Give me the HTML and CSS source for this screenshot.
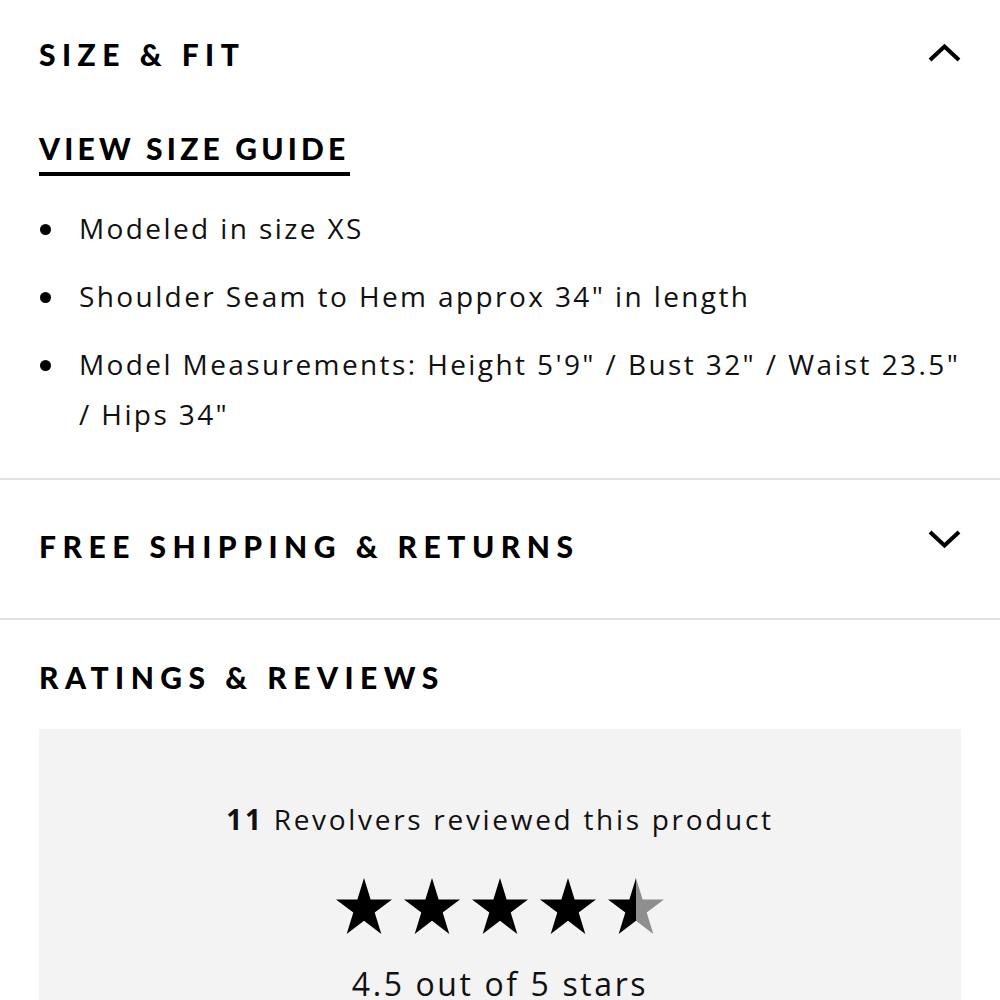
FILE: index.html
```html
<!DOCTYPE html>
<html lang="en">
<head>
<meta charset="utf-8">
<title>Size &amp; Fit</title>
<link rel="stylesheet" href="styles.css">
</head>
<body>
<div class="page">
  <section class="acc acc-open">
    <div class="acc-header first">
      <h2 class="acc-title">SIZE &amp; FIT</h2>
      <svg class="chev" width="33" height="18" viewBox="0 0 33 18" aria-hidden="true"><polyline points="2,16 16.5,2.5 31,16" fill="none" stroke="#000" stroke-width="4"/></svg>
    </div>
    <div class="acc-body">
      <a class="size-guide" href="#">VIEW SIZE GUIDE</a>
      <ul class="fit-list">
        <li>Modeled in size XS</li>
        <li>Shoulder Seam to Hem approx 34" in length</li>
        <li>Model Measurements: Height 5'9" / Bust 32" / Waist 23.5" / Hips 34"</li>
      </ul>
    </div>
  </section>
  <section class="acc">
    <div class="acc-header">
      <h2 class="acc-title">FREE SHIPPING &amp; RETURNS</h2>
      <svg class="chev chev-down" width="33" height="18" viewBox="0 0 33 18" aria-hidden="true"><polyline points="2,2 16.5,15.5 31,2" fill="none" stroke="#000" stroke-width="4"/></svg>
    </div>
  </section>
  <section class="reviews">
    <h2 class="acc-title">RATINGS &amp; REVIEWS</h2>
    <div class="review-box">
      <p class="review-count"><b>11</b> Revolvers reviewed this product</p>
      <div class="stars">
        <svg class="star" viewBox="2.45 0 95.1 90.45" preserveAspectRatio="none"><path d="M50 0L61.23 34.55L97.55 34.55L68.17 55.9L79.39 90.45L50 69.1L20.61 90.45L31.83 55.9L2.45 34.55L38.77 34.55Z" fill="#000"/></svg>
        <svg class="star" viewBox="2.45 0 95.1 90.45" preserveAspectRatio="none"><path d="M50 0L61.23 34.55L97.55 34.55L68.17 55.9L79.39 90.45L50 69.1L20.61 90.45L31.83 55.9L2.45 34.55L38.77 34.55Z" fill="#000"/></svg>
        <svg class="star" viewBox="2.45 0 95.1 90.45" preserveAspectRatio="none"><path d="M50 0L61.23 34.55L97.55 34.55L68.17 55.9L79.39 90.45L50 69.1L20.61 90.45L31.83 55.9L2.45 34.55L38.77 34.55Z" fill="#000"/></svg>
        <svg class="star" viewBox="2.45 0 95.1 90.45" preserveAspectRatio="none"><path d="M50 0L61.23 34.55L97.55 34.55L68.17 55.9L79.39 90.45L50 69.1L20.61 90.45L31.83 55.9L2.45 34.55L38.77 34.55Z" fill="#000"/></svg>
        <svg class="star" viewBox="2.45 0 95.1 90.45" preserveAspectRatio="none"><defs><linearGradient id="half" x1="0" x2="1" y1="0" y2="0"><stop offset="0.5" stop-color="#000"/><stop offset="0.5" stop-color="#8e8e8e"/></linearGradient></defs><path d="M50 0L61.23 34.55L97.55 34.55L68.17 55.9L79.39 90.45L50 69.1L20.61 90.45L31.83 55.9L2.45 34.55L38.77 34.55Z" fill="url(#half)"/></svg>
      </div>
      <p class="rating-text">4.5 out of 5 stars</p>
    </div>
  </section>
</div>
</body>
</html>
```

FILE: styles.css
```css
* { box-sizing: border-box; }
html, body { margin: 0; padding: 0; background: #fff; }
body {
  font-family: "Open Sans", "Noto Sans", sans-serif;
  color: #111;
}
.page {
  width: 1000px;
  height: 1000px;
  overflow: hidden;
}
.acc {
  border-bottom: 2px solid #e0e0e0;
}
.acc-header {
  display: flex;
  align-items: center;
  justify-content: space-between;
  height: 138px;
  padding: 0 39px 6px;
}
.acc-header.first {
  height: auto;
  padding: 39px 39px 0;
}
.acc-title {
  margin: 0;
  font-family: "Lato", "Liberation Sans", sans-serif;
  font-weight: 900;
  font-size: 30px;
  line-height: 30px;
  letter-spacing: 6.5px;
  color: #000;
}
.chev { display: block; margin-top: -2px; }
.chev-down { margin-top: -14px; }
.acc-body {
  padding: 64px 39px 39px;
}
.size-guide {
  display: inline-block;
  font-family: "Lato", "Liberation Sans", sans-serif;
  font-weight: 900;
  font-size: 30px;
  line-height: 30px;
  letter-spacing: 4.2px;
  color: #000;
  text-decoration: none;
  padding-bottom: 9px;
  border-bottom: 4px solid #000;
}
.fit-list {
  list-style: none;
  margin: 27px 0 0;
  padding: 0;
  font-size: 28px;
  line-height: 50px;
  letter-spacing: 2.4px;
}
.fit-list li {
  display: flex;
  margin-top: 18px;
}
.fit-list li:first-child { margin-top: 0; }
.fit-list li::before {
  content: "";
  flex: none;
  width: 11px;
  height: 11px;
  border-radius: 50%;
  background: #000;
  margin: 21px 28px 0 1px;
}
.reviews {
  padding: 42px 39px 0;
}
.review-box {
  margin-top: 37px;
  background: #f3f3f3;
  padding: 70px 20px 40px;
  text-align: center;
}
.review-count {
  margin: 0;
  font-size: 28px;
  line-height: 40px;
  letter-spacing: 2.7px;
}
.review-count b { font-weight: 700; }
.stars {
  display: flex;
  justify-content: center;
  gap: 12px;
  margin-top: 39px;
}
.star { width: 56px; height: 56px; display: block; }
.rating-text {
  margin: 30px 0 0;
  font-size: 32px;
  line-height: 40px;
  letter-spacing: 2.6px;
}
```
